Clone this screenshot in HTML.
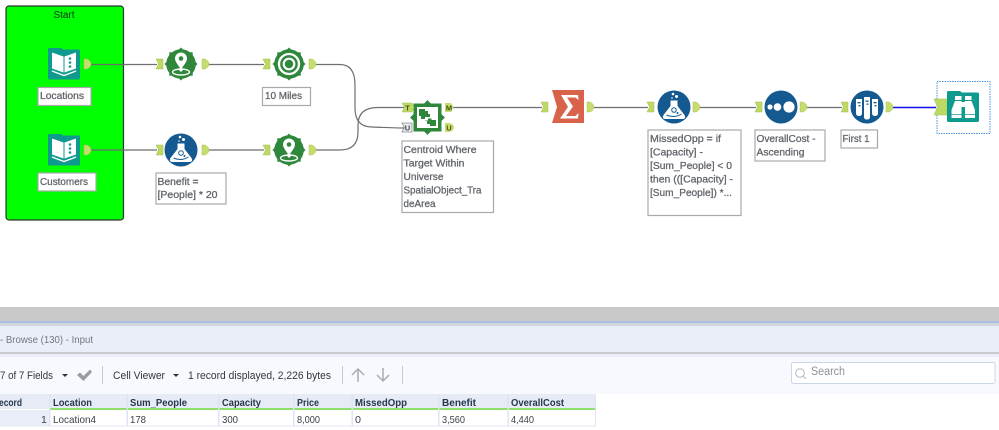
<!DOCTYPE html>
<html><head><meta charset="utf-8"><title>Workflow</title>
<style>
html,body{margin:0;padding:0;background:#fff;width:999px;height:430px;overflow:hidden}
svg{display:block;filter:blur(.35px)}
text{font-family:"Liberation Sans",sans-serif}
.l{font-size:10.5px;fill:#62666c;stroke:#62666c;stroke-width:.3}
.box{fill:#fff;stroke:#a9a9a9;stroke-width:1.2}
.w{fill:none;stroke:#6e6e6e;stroke-width:1.2}
.t{font-size:10.5px;fill:#3c4048}
.h{font-size:10.5px;font-weight:bold;fill:#26374d}
.tb{font-size:11px;fill:#33383f}
</style></head><body>
<svg width="999" height="430" viewBox="0 0 999 430" xmlns="http://www.w3.org/2000/svg">
<defs>
<g id="out"><path d="M0,-5 H3 Q7,-3 7,0 Q7,3 3,5 H0 Z" fill="#c6dc6c" stroke="#aebf60" stroke-width=".5"/></g>
<g id="in"><path d="M0,-5 H7 V5 H0 L2.500,0 Z" fill="#bcd964" stroke="#a5bd58" stroke-width=".5"/></g>
<g id="book">
<path d="M1.500,0.500 H13 L15,2 H30.500 Q32,2 32,3.500 V30.500 Q32,32 30.500,32 H1.500 Q0,32 0,30.500 V2 Q0,0.500 1.500,0.500 Z" fill="#0f9a8e"/>
<path d="M4,5 L15.500,9 V25 L4,21 Z M16.500,9 L28,5 V21 L16.500,25 Z" fill="#fff"/>
<path d="M4,23.500 L16,28 L28,23.500" fill="none" stroke="#fff" stroke-width="1.300"/>
<circle cx="22" cy="11" r="1.300" fill="#0f9a8e"/><circle cx="22" cy="15" r="1.300" fill="#0f9a8e"/><circle cx="22" cy="19" r="1.300" fill="#0f9a8e"/>
</g>
<g id="gear" fill="#2f873c">
<circle r="14.800"/>
<rect x="-11.700" y="-11.700" width="23.400" height="23.400"/>
<rect x="-11.700" y="-11.700" width="23.400" height="23.400" transform="rotate(45)"/>
</g>
<g id="pin"><use href="#gear"/>
<path d="M0,-11.500 a6,6 0 0 1 6,6 c0,3.800 -4,7 -6,11.500 c-2,-4.500 -6,-7.700 -6,-11.500 a6,6 0 0 1 6,-6 z" fill="#fff"/>
<circle cy="-5.500" r="2.300" fill="#2f873c"/>
<ellipse cy="8" rx="8.500" ry="3" fill="none" stroke="#fff" stroke-width="1.400"/>
<path d="M-2,6 L0,8 L2,6 L0,2 Z" fill="#fff"/>
</g>
<g id="target"><use href="#gear"/>
<circle r="10" fill="none" stroke="#fff" stroke-width="2.300"/>
<circle r="5.300" fill="none" stroke="#fff" stroke-width="2.200"/>
</g>
<g id="flask"><circle r="16.500" fill="#14598f"/>
<path d="M-3.500,-6.500 H3.500 V-1 L10.500,8 Q12.500,12 8,12 H-8 Q-12.500,12 -10.500,8 L-3.500,-1 Z" fill="#fff"/>
<circle cx="0" cy="3" r="2.300" fill="none" stroke="#14598f" stroke-width="1"/>
<circle cx="3.500" cy="6" r="1" fill="#14598f"/>
<path d="M-7.500,8 Q0,11.500 7.500,7" fill="none" stroke="#14598f" stroke-width="1"/>
<circle cx="-1" cy="-13" r="1.300" fill="#fff"/><circle cx="2.500" cy="-10.500" r="1.500" fill="#fff"/><circle cx="-2" cy="-9" r=".8" fill="#fff"/>
</g>
</defs>

<!-- container -->
<rect x="6" y="6" width="117.500" height="214" rx="3" fill="#00f000" stroke="#2c3a2c" stroke-width="1.200"/>
<rect x="7" y="7" width="115.500" height="212" rx="2" fill="#00ff00"/>
<text x="64" y="18" text-anchor="middle" font-size="10" fill="#10301a" textLength="21" lengthAdjust="spacingAndGlyphs">Start</text>

<!-- wires -->
<path class="w" d="M90,64.500 H157 M208,64.500 H264 M315,64.500 H340 Q355,64.500 355,85 V108 Q355,127 372,127 Q395,128 404,128"/>
<path class="w" d="M90,150 H157 M208,150 H264 M315,150 H340 Q358,150 358,132 V125 Q358,107.500 378,107.500 H404"/>
<path class="w" d="M453,107.500 H542 M593,107.500 H648 M700,107.500 H756 M807,107.500 H842"/>
<path d="M893,107.500 H936" stroke="#1010e8" stroke-width="1.400" fill="none"/>

<!-- tools row 1 -->
<use href="#book" x="48" y="47.500"/>
<use href="#out" x="84" y="64"/>
<rect class="box" x="38" y="87.500" width="53" height="18"/>
<text class="l" x="40" y="99" textLength="44" lengthAdjust="spacingAndGlyphs">Locations</text>

<use href="#in" x="156" y="64"/><use href="#pin" x="181" y="64"/><use href="#out" x="202" y="64"/>
<use href="#in" x="263" y="64"/><use href="#target" x="289" y="64"/><use href="#out" x="309" y="64"/>
<rect class="box" x="262.500" y="87.500" width="48" height="18"/>
<text class="l" x="265" y="99" textLength="37" lengthAdjust="spacingAndGlyphs">10 Miles</text>

<!-- row 2 -->
<use href="#book" x="48" y="133.500"/>
<use href="#out" x="84" y="150"/>
<rect class="box" x="38" y="173" width="58" height="18"/>
<text class="l" x="40" y="185" textLength="48" lengthAdjust="spacingAndGlyphs">Customers</text>

<use href="#in" x="156" y="150"/><use href="#flask" x="181" y="150"/><use href="#out" x="202" y="150"/>
<rect class="box" x="156" y="173" width="70" height="31"/>
<text class="l" x="157.500" y="185" textLength="41" lengthAdjust="spacingAndGlyphs">Benefit =</text>
<text class="l" x="157.500" y="198" textLength="60" lengthAdjust="spacingAndGlyphs">[People] * 20</text>
<use href="#in" x="263" y="150"/><use href="#pin" x="289" y="150"/><use href="#out" x="309" y="150"/>

<!-- detour/spatial match -->
<g fill="#2f873c">
<rect x="-14" y="-14" width="28" height="28" transform="translate(427.500 117.500)"/>
<rect x="-12.300" y="-12.300" width="24.600" height="24.600" transform="translate(427.500 117.500) rotate(45)"/>
</g>
<rect x="417" y="107" width="21" height="21" fill="#fff"/>
<path d="M419,109 H425 V111 H428 V114 H430 V117 H425 V119 H421 V116 H419 Z" fill="#2f873c"/>
<path d="M436,126 H430 V124 H427 V121 H425 V120.500 H428 V118.500 H431.500 V120 H436 Z" fill="#2f873c"/>

<path d="M402,103 H412 L414,107.500 L412,112 H402 L404.500,107.500 Z" fill="#bcd964" stroke="#a5bd58" stroke-width=".5"/>
<text x="407.500" y="110.500" font-size="7.500" font-weight="bold" text-anchor="middle" fill="#44551f">T</text>
<path d="M402,123 H412 V132 H402 L404.500,127.500 Z" fill="#e8ecec" stroke="#8a8f95" stroke-width=".8"/>
<text x="407.500" y="130.500" font-size="7.500" font-weight="bold" text-anchor="middle" fill="#445">U</text>
<path d="M445,103 H451 L453.500,107.500 L451,112 H445 Z" fill="#c6dc6c"/>
<text x="449" y="110.500" font-size="7.500" font-weight="bold" text-anchor="middle" fill="#44551f">M</text>
<path d="M445,123 H450 Q454,125 454,127.500 Q454,130 450,132 H445 Z" fill="#c6dc6c"/>
<text x="449" y="130.500" font-size="7.500" font-weight="bold" text-anchor="middle" fill="#44551f">U</text>
<rect class="box" x="402" y="141" width="91.500" height="71.500"/>
<text class="l" x="403.500" y="153" textLength="73" lengthAdjust="spacingAndGlyphs">Centroid Where</text>
<text class="l" x="403.500" y="166.500" textLength="61" lengthAdjust="spacingAndGlyphs">Target Within</text>
<text class="l" x="403.500" y="180" textLength="40" lengthAdjust="spacingAndGlyphs">Universe</text>
<text class="l" x="403.500" y="193.500" textLength="78" lengthAdjust="spacingAndGlyphs">SpatialObject_Tra</text>
<text class="l" x="403.500" y="207" textLength="32" lengthAdjust="spacingAndGlyphs">deArea</text>

<!-- summarize -->
<use href="#in" x="541" y="107"/>
<path d="M552,90 H584 V123 H552 L557,107 Z" fill="#d9634a"/>
<path d="M561,95 H578 L578.500,100 L575.500,97.500 H567 L573,106.500 L566,116 H575.500 L578.500,113 L578,118.500 H560 L568,107 Z" fill="#fff"/>
<use href="#out" x="587" y="107"/>

<!-- formula -->
<use href="#in" x="647" y="107"/><use href="#flask" x="674" y="107"/><use href="#out" x="693" y="107"/>
<rect class="box" x="648" y="130" width="93" height="85.500"/>
<text class="l" x="650" y="142" textLength="71" lengthAdjust="spacingAndGlyphs">MissedOpp = if</text>
<text class="l" x="650" y="155.500" textLength="53" lengthAdjust="spacingAndGlyphs">[Capacity] -</text>
<text class="l" x="650" y="169" textLength="82" lengthAdjust="spacingAndGlyphs">[Sum_People] &lt; 0</text>
<text class="l" x="650" y="182.500" textLength="83" lengthAdjust="spacingAndGlyphs">then (([Capacity] -</text>
<text class="l" x="650" y="196" textLength="82" lengthAdjust="spacingAndGlyphs">[Sum_People]) *...</text>

<!-- sort -->
<use href="#in" x="755" y="107"/>
<circle cx="781" cy="107" r="16.500" fill="#14598f"/>
<circle cx="770" cy="107" r="2.600" fill="#fff"/><circle cx="777.500" cy="107" r="3.800" fill="#fff"/><circle cx="789" cy="107" r="5.600" fill="#fff"/>
<use href="#out" x="800" y="107"/>
<rect class="box" x="755" y="130" width="70" height="31"/>
<text class="l" x="756.500" y="142" textLength="59" lengthAdjust="spacingAndGlyphs">OverallCost -</text>
<text class="l" x="756.500" y="155.500" textLength="48" lengthAdjust="spacingAndGlyphs">Ascending</text>

<!-- sample -->
<use href="#in" x="841" y="107"/>
<circle cx="867" cy="107" r="16.500" fill="#14598f"/>
<g fill="#fff">
<path d="M856,99 H862 V113 Q862,116 859,116 Q856,116 856,113 Z"/>
<path d="M864,97 H870 V117 Q870,119.500 867,119.500 Q864,119.500 864,117 Z"/>
<path d="M872,99 H878 V113 Q878,116 875,116 Q872,116 872,113 Z"/>
</g>
<g fill="#14598f"><rect x="857.500" y="102" width="3" height="1.300"/><rect x="858.500" y="105" width="2" height="1.300"/><rect x="865.500" y="100.500" width="3" height="1.300"/><rect x="866.500" y="103.500" width="2" height="1.300"/><rect x="873.500" y="102" width="3" height="1.300"/><rect x="874.500" y="105" width="2" height="1.300"/></g>
<use href="#out" x="886" y="107"/>
<rect class="box" x="841" y="130" width="36.500" height="18"/>
<text class="l" x="842.500" y="142" textLength="27" lengthAdjust="spacingAndGlyphs">First 1</text>

<!-- browse -->
<rect x="937" y="81.500" width="53" height="52" fill="none" stroke="#4d94dc" stroke-width="1" stroke-dasharray="1.500 1"/>
<path d="M934,99 H947 V115 H934 L937.500,107 Z" fill="#bcd964" stroke="#a5bd58" stroke-width=".5"/>
<path d="M948.500,91 H960 L962,92.500 H977.500 Q979,92.500 979,94 V120.500 Q979,122 977.500,122 H948.500 Q947,122 947,120.500 V92.500 Q947,91 948.500,91 Z" fill="#0f9a8e"/>
<g fill="#fff">
<path d="M955,96 H961.500 V100 H955 Z M965,96 H971.500 V100 H965 Z"/>
<path d="M955,101 H961.500 V118 H951.500 V110 Z M965,101 H971.500 L975,110 V118 H965 Z"/>
<rect x="961.500" y="102" width="3.500" height="5"/>
</g>
<path d="M951.500,114.500 H961.500 M965,114.500 H975" stroke="#0f9a8e" stroke-width=".8"/>

<!-- lower panel -->
<rect x="0" y="307" width="999" height="14" fill="#c9c9c9"/>
<rect x="0" y="321" width="999" height="2" fill="#a9bfe0"/>
<rect x="0" y="323" width="999" height="3" fill="#d3d7de"/>
<rect x="0" y="326" width="999" height="26" fill="#e9eef8"/>
<rect x="0" y="352" width="999" height="2" fill="#c9cbce"/>
<rect x="0" y="354" width="999" height="3" fill="#e9eef8"/>
<rect x="0" y="357" width="999" height="37" fill="#f7f9fe"/>
<text x="0" y="343" font-size="10.500" fill="#73777d" textLength="93" lengthAdjust="spacingAndGlyphs">- Browse (130) - Input</text>

<text class="tb" x="0" y="379" textLength="53" lengthAdjust="spacingAndGlyphs">7 of 7 Fields</text>
<path d="M62,374 H68 L65,377 Z" fill="#333"/>
<path d="M77,375 L80,372.500 L83.500,376 L90,369.500 L92,372 L83.500,381 Z" fill="#9b9b9b"/>
<rect x="102" y="366" width="1" height="18" fill="#c6cacf"/>
<text class="tb" x="113" y="379" textLength="52" lengthAdjust="spacingAndGlyphs">Cell Viewer</text>
<path d="M173,374 H179 L176,377 Z" fill="#333"/>
<text class="tb" x="188" y="379" textLength="143" lengthAdjust="spacingAndGlyphs">1 record displayed, 2,226 bytes</text>
<rect x="342" y="366" width="1" height="18" fill="#c6cacf"/>
<path d="M358,382 V369 M352,375 L358,369 L364,375" fill="none" stroke="#a8adb3" stroke-width="1.500"/>
<path d="M383,368 V381 M377,375 L383,381 L389,375" fill="none" stroke="#a8adb3" stroke-width="1.500"/>
<rect x="402" y="366" width="1" height="18" fill="#c6cacf"/>

<rect x="791.500" y="362.500" width="203.500" height="21" rx="2" fill="#fff" stroke="#ccd6ea"/>
<circle cx="800" cy="373" r="4.300" fill="none" stroke="#b4b9c0" stroke-width="1"/>
<path d="M803,376 L806,379" stroke="#b4b9c0"/>
<text x="811" y="375" font-size="11.500" fill="#8e9298" textLength="34" lengthAdjust="spacingAndGlyphs">Search</text>

<!-- table -->
<rect x="0" y="394" width="596" height="15" fill="#e6ebf5"/>
<rect x="50" y="408" width="546" height="2" fill="#8ee06a"/>
<rect x="0" y="410" width="49" height="16" fill="#e9eef8"/>
<rect x="50" y="410" width="546" height="16" fill="#fff"/>
<rect x="0" y="425.500" width="596" height="1" fill="#e2e8f3"/>
<g fill="#dfe5f0">
<rect x="49" y="394" width="1.500" height="32"/><rect x="126.500" y="394" width="1.500" height="32"/><rect x="218" y="394" width="1.500" height="32"/><rect x="293" y="394" width="1.500" height="32"/><rect x="351.500" y="394" width="1.500" height="32"/><rect x="438" y="394" width="1.500" height="32"/><rect x="507.500" y="394" width="1.500" height="32"/><rect x="595" y="394" width="1" height="32"/>
</g>
<text class="h" x="-1" y="406" textLength="23" lengthAdjust="spacingAndGlyphs">ecord</text>
<text class="h" x="53" y="406" textLength="39" lengthAdjust="spacingAndGlyphs">Location</text>
<text class="h" x="130" y="406" textLength="57" lengthAdjust="spacingAndGlyphs">Sum_People</text>
<text class="h" x="222" y="406" textLength="39" lengthAdjust="spacingAndGlyphs">Capacity</text>
<text class="h" x="297" y="406" textLength="22" lengthAdjust="spacingAndGlyphs">Price</text>
<text class="h" x="355" y="406" textLength="52" lengthAdjust="spacingAndGlyphs">MissedOpp</text>
<text class="h" x="442" y="406" textLength="34" lengthAdjust="spacingAndGlyphs">Benefit</text>
<text class="h" x="511" y="406" textLength="53" lengthAdjust="spacingAndGlyphs">OverallCost</text>
<text class="t" x="41" y="423">1</text>
<text class="t" x="53" y="423" textLength="43" lengthAdjust="spacingAndGlyphs">Location4</text>
<text class="t" x="130" y="423" textLength="16" lengthAdjust="spacingAndGlyphs">178</text>
<text class="t" x="222" y="423" textLength="16" lengthAdjust="spacingAndGlyphs">300</text>
<text class="t" x="297" y="423" textLength="23" lengthAdjust="spacingAndGlyphs">8,000</text>
<text class="t" x="355" y="423" textLength="6" lengthAdjust="spacingAndGlyphs">0</text>
<text class="t" x="442" y="423" textLength="23" lengthAdjust="spacingAndGlyphs">3,560</text>
<text class="t" x="511" y="423" textLength="23" lengthAdjust="spacingAndGlyphs">4,440</text>
</svg>
</body></html>
